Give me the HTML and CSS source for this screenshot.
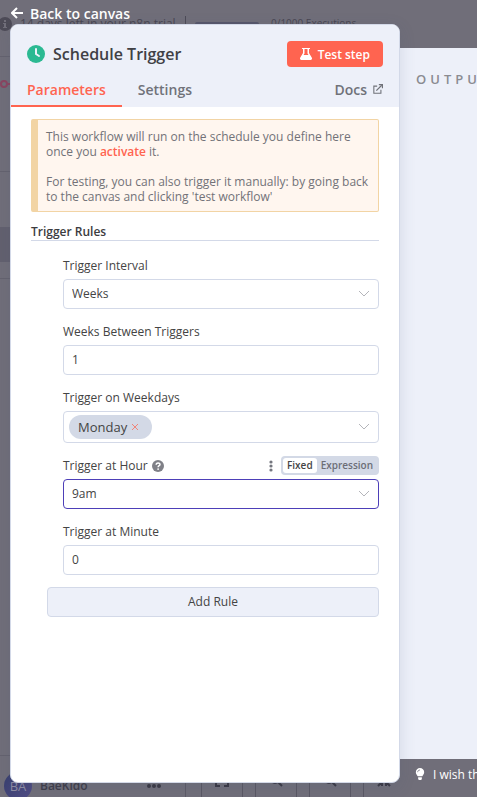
FILE: index.html
```html
<!DOCTYPE html>
<html lang="en">
<head>
<meta charset="utf-8">
<meta name="viewport" content="width=device-width, initial-scale=1">
<title>Schedule Trigger</title>
<link rel="stylesheet" href="styles.css">
</head>
<body>
<div class="app">
  <div class="canvas" aria-hidden="true">
    <div class="trial">
      <svg class="info" viewBox="0 0 14 14"><circle cx="7" cy="7" r="7" fill="#4d4b57"/><path d="M6 3h2v2H6zM5 6h3v4h1v1H5v-1h1V7H5z" fill="#716f7a"/></svg>
      <span class="trial-text">14 days left in your n8n trial</span>
      <span class="trial-rule"></span>
      <span class="meter"></span>
      <span class="quota">0/1000 Executions</span>
    </div>
    <div class="side">
      <div class="side-logo"><svg viewBox="0 0 12 10"><circle cx="4" cy="5" r="3" fill="none" stroke="#8a4560" stroke-width="2"/><path d="M7 5h5" stroke="#8a4560" stroke-width="2"/></svg></div>
      <div class="side-gap"></div>
      <div class="side-active"></div>
      <div class="side-rest"></div>
    </div>
    <div class="foot">
      <div class="user">
        <span class="avatar">BA</span>
        <span class="user-name">BaeKido</span>
        <svg class="dots" viewBox="0 0 14 4" fill="#3a3844"><circle cx="2" cy="2" r="2"/><circle cx="7" cy="2" r="2"/><circle cx="12" cy="2" r="2"/></svg>
      </div>
      <div class="tools">
        <span class="tool"><svg viewBox="0 0 14 14"><path d="M1 5V1h4M9 1h4v4M13 9v4H9M5 13H1V9"/></svg></span>
        <span class="tool"><svg viewBox="0 0 14 14"><circle cx="6" cy="6" r="4"/><path d="M9 9l4 4"/></svg></span>
        <span class="tool"><svg viewBox="0 0 14 14"><circle cx="6" cy="6" r="4"/><path d="M9 9l4 4"/></svg></span>
        <span class="tool"><svg viewBox="0 0 14 14"><path d="M1 13l4-4v4M13 13L9 9v4M1 9h4M13 9H9"/></svg></span>
      </div>
    </div>
  </div>

  <a class="back" href="#">
    <svg viewBox="0 0 12 12"><path d="M6 1L1 6l5 5M1 6h11" fill="none" stroke="#fff" stroke-width="2"/></svg>
    Back to canvas
  </a>

  <main class="workspace">
    <section class="panel">
      <header class="panel-head">
        <div class="title-row">
          <svg class="clock" viewBox="0 0 18 18"><circle cx="9" cy="9" r="9" fill="#2bb992"/><path d="M9 4v5l3 2" fill="none" stroke="#eef1fa" stroke-width="2" stroke-linecap="round"/></svg>
          <h1>Schedule Trigger</h1>
          <button class="test" type="button">
            <svg viewBox="0 0 12 12"><path fill-rule="evenodd" d="M2 0h8v1H9v4l3 5v1l-1 1H1l-1-1v-1l3-5V1H2zM4.500 1v4.500L3.500 7h5L7.500 5.500V1z" fill="#fff"/></svg>
            Test step
          </button>
        </div>
        <nav class="tabs">
          <a class="tab tab-on" href="#">Parameters</a>
          <a class="tab" href="#">Settings</a>
          <a class="tab docs" href="#">Docs
            <svg viewBox="0 0 12 12" fill="none" stroke="currentColor"><path d="M5 2.500H1v8.500h8.500V7" stroke-width="1.300"/><path d="M4 8l6.500-6.500" stroke-width="1.500"/><path d="M7 .700h4.300V5" stroke-width="1.400"/></svg>
          </a>
        </nav>
      </header>

      <form class="panel-body">
        <div class="notice">
          <p>This workflow will run on the schedule you define here once you <a href="#">activate</a> it.</p>
          <p>For testing, you can also trigger it manually: by going back to the canvas and clicking 'test workflow'</p>
        </div>
        <h2>Trigger Rules</h2>
        <div class="rules">
          <div class="row">
            <div class="label-row"><label for="interval">Trigger Interval</label></div>
            <div class="field">
              <select id="interval"><option>Weeks</option></select>
              <svg class="chevron" viewBox="0 0 12 8"><path d="M1 1l5 5 5-5"/></svg>
            </div>
          </div>
          <div class="row">
            <div class="label-row"><label for="between">Weeks Between Triggers</label></div>
            <div class="field"><input id="between" type="text" value="1"></div>
          </div>
          <div class="row">
            <div class="label-row"><label for="weekdays">Trigger on Weekdays</label></div>
            <div class="field field-tags">
              <span class="chip">Monday
                <button type="button" aria-label="Remove Monday"><svg viewBox="0 0 6 6"><path d="M0 0l6 6M6 0L0 6" stroke="#f0857a" stroke-width="1"/></svg></button>
              </span>
              <input id="weekdays" type="text">
              <svg class="chevron" viewBox="0 0 12 8"><path d="M1 1l5 5 5-5"/></svg>
            </div>
          </div>
          <div class="row">
            <div class="label-row">
              <label for="hour">Trigger at Hour</label>
              <svg class="help" viewBox="0 0 12 12"><circle cx="6" cy="6" r="6" fill="#7f8087"/><path d="M4.200 4.700C4.200 2.400 8 2.400 8 4.500 8 5.800 6.100 5.700 6.100 7.200" fill="none" stroke="#fff" stroke-width="1.500"/><circle cx="6.100" cy="9.100" r=".9" fill="#fff"/></svg>
              <svg class="more" viewBox="0 0 4 12" fill="#74767e"><circle cx="2" cy="2" r="1.600"/><circle cx="2" cy="6" r="1.600"/><circle cx="2" cy="10" r="1.600"/></svg>
              <div class="mode" role="radiogroup" aria-label="Value type">
                <label><input type="radio" name="mode" checked><span>Fixed</span></label>
                <label><input type="radio" name="mode"><span>Expression</span></label>
              </div>
            </div>
            <div class="field field-focus">
              <select id="hour"><option>9am</option></select>
              <svg class="chevron" viewBox="0 0 12 8"><path d="M1 1l5 5 5-5"/></svg>
            </div>
          </div>
          <div class="row">
            <div class="label-row"><label for="minute">Trigger at Minute</label></div>
            <div class="field"><input id="minute" type="text" value="0"></div>
          </div>
        </div>
        <button class="add" type="button">Add Rule</button>
      </form>
    </section>

    <aside class="output-side">
      <section class="output"><h2>OUTPUT</h2></section>
      <a class="wish" href="#">
        <svg viewBox="0 0 10 14" fill="#fff"><path d="M5 0a4.500 4.500 0 0 1 4.500 4.500C9.500 6.500 8 7.500 7.500 9h-5C2 7.500.5 6.500.5 4.500A4.500 4.500 0 0 1 5 0zM3 10h4v2L6 13H4l-1-1z"/><path d="M2.500 4.500C2.500 3 3.500 2.200 5 2.200" fill="none" stroke="#706e79" stroke-width=".8"/></svg>
        I wish this node would...
      </a>
    </aside>
  </main>
</div>
</body>
</html>
```
FILE: styles.css
```css
* { box-sizing: border-box; }

body {
  margin: 0;
  font-family: "Open Sans", "Noto Sans", sans-serif;
  font-size: 12px;
  line-height: 15px;
  color: #444;
}

h1, h2, p { margin: 0; }
a { text-decoration: none; color: inherit; }
svg { display: block; flex: none; }

button, input, select {
  font: inherit;
  color: inherit;
  border: 0;
  padding: 0;
  margin: 0;
  background: none;
}

.app {
  position: relative;
  display: flex;
  flex-direction: column;
  min-height: 100vh;
  overflow: hidden;
  background: #706e79;
}

/* Dimmed editor behind the dialog */
.canvas {
  position: absolute;
  inset: 0;
  display: flex;
  flex-direction: column;
  color: #484652;
}

.trial {
  display: flex;
  align-items: center;
  height: 57px;
  padding-bottom: 9px;
  border-bottom: 1px solid #64626e;
  white-space: nowrap;
}
.info { width: 14px; height: 14px; margin: 0 8px 0 -2px; }
.trial-text { width: 165px; }
.trial-rule { width: 1px; height: 16px; background: #4d4b57; }
.meter { width: 64px; height: 4px; margin: 0 12px 0 9px; border-radius: 2px; background: #56566a; }
.quota { font-size: 10px; }

.side { flex: 1; display: flex; flex-direction: column; width: 185px; }
.side-logo { height: 115px; padding-top: 22px; border-bottom: 1px solid #64626e; }
.side-logo svg { width: 12px; height: 10px; }
.side-gap { height: 55px; }
.side-active { height: 35px; background: #62606e; }
.side-rest { height: 17px; border-bottom: 1px solid #64626e; }

.foot { display: flex; height: 42px; border-top: 1px solid #64626e; }
.user {
  display: flex;
  align-items: center;
  width: 186px;
  padding: 18px 24px 0 4px;
  border-right: 1px solid #5c5a66;
}
.avatar {
  width: 28px;
  height: 28px;
  border-radius: 50%;
  background: linear-gradient(135deg, #363e6c, #524d86);
  color: #8f8da5;
  font-size: 13px;
  line-height: 28px;
  text-align: center;
}
.user-name { margin-left: 8px; font-size: 12px; font-weight: 600; color: #3e3c48; }
.dots { width: 14px; height: 4px; margin-left: auto; }
.tools { display: flex; gap: 12px; padding-left: 15px; }
.tool {
  width: 42px;
  padding: 17px 13px 0;
  border: 1px solid #595763;
  border-width: 0 1px;
}
.tool svg { width: 14px; height: 14px; fill: none; stroke: #3a3844; stroke-width: 2; }

/* Dialog */
.back {
  position: relative;
  display: flex;
  align-items: center;
  gap: 7px;
  height: 24px;
  padding: 2px 11px 0;
  color: #fff;
  font-size: 14px;
  font-weight: 600;
}
.back svg { width: 12px; height: 12px; }

.workspace {
  position: relative;
  flex: 1;
  display: grid;
  grid-template-columns: 1fr 77px;
  padding-left: 10px;
}

.panel {
  z-index: 1;
  margin-bottom: 14px;
  border: 1px solid #d3d9e8;
  border-radius: 8px;
  background: #fff;
  box-shadow: 0 4px 16px rgba(68, 84, 120, 0.16);
  overflow: hidden;
}

.panel-head { background: #edf0f9; }
.title-row {
  display: flex;
  align-items: center;
  gap: 8px;
  padding: 16px 16px 0;
}
.clock { width: 18px; height: 18px; }
h1 { font-size: 16px; line-height: 24px; font-weight: 600; color: #404045; }

.test {
  display: flex;
  align-items: center;
  gap: 6px;
  height: 26px;
  margin-left: auto;
  padding: 0 13px;
  border-radius: 4px;
  background: #ff6450;
  color: #fff;
  font-weight: 600;
}
.test svg { width: 12px; height: 12px; }

.tabs { display: flex; }
.tab {
  display: flex;
  align-items: center;
  gap: 6px;
  height: 40px;
  padding: 6px 16px 0;
  border-bottom: 2px solid transparent;
  font-size: 14px;
  font-weight: 600;
  color: #707279;
}
.tab-on { color: #ff6450; border-color: #ff6450; }
.docs { margin-left: auto; }
.docs svg { width: 10px; height: 10px; }

.panel-body { display: flex; flex-direction: column; padding: 12px 20px; }

.notice {
  display: flex;
  flex-direction: column;
  gap: 15px;
  padding: 9px 8px 7px;
  border: 1px solid #f2d4a4;
  border-left-width: 7px;
  border-radius: 2px;
  background: #fff6ef;
  color: #727278;
}
.notice a { color: #ff6450; font-weight: 600; }

.panel-body h2 {
  margin-top: 12px;
  padding-bottom: 1px;
  border-bottom: 1px solid #d3d9e8;
  font-size: 12px;
  line-height: 15px;
  font-weight: 600;
  color: #3c3c40;
}

.rules {
  display: flex;
  flex-direction: column;
  gap: 12px;
  padding: 14px 0 12px 32px;
}
.label-row { display: flex; align-items: center; height: 24px; padding-bottom: 3px; }
.help { width: 12px; height: 12px; margin-left: 4px; }
.more { width: 4px; height: 12px; margin: 0 8px 0 auto; }

.field {
  display: flex;
  align-items: center;
  height: 30px;
  padding: 0 8px;
  border: 1px solid #d3d9e8;
  border-radius: 4px;
  background: #fff;
}
.field-focus { border-color: #4d3fb8; }
.field-tags { height: 32px; padding-left: 5px; }
.field input, .field select {
  flex: 1;
  min-width: 0;
  height: 28px;
  padding-bottom: 1px;
  outline: 0;
  appearance: none;
}
.chevron { width: 12px; height: 8px; fill: none; stroke: #b4b5ba; }

.chip {
  display: flex;
  align-items: center;
  gap: 5px;
  height: 24px;
  padding: 0 14px 0 9px;
  border-radius: 12px;
  background: #d3d9e6;
  font-size: 13px;
}
.chip svg { width: 6px; height: 6px; }

.mode {
  display: flex;
  height: 19px;
  padding: 2px;
  border-radius: 4px;
  background: #d3d9e6;
  font-size: 10px;
  font-weight: 600;
  color: #6c6e76;
}
.mode input { position: absolute; opacity: 0; }
.mode span { display: block; padding: 0 4px; border-radius: 3px; }
.mode input:checked + span { background: #fff; color: #444; }

.add {
  height: 30px;
  margin-left: 16px;
  padding-bottom: 1px;
  border: 1px solid #d3d9e8;
  border-radius: 4px;
  background: #edf0f9;
}

.output-side { display: flex; flex-direction: column; min-width: 0; padding-top: 24px; }
.output { flex: 1; padding: 22px 16px; background: #edf0f9; overflow: hidden; }
.output h2 {
  font-size: 13px;
  line-height: 18px;
  font-weight: 600;
  letter-spacing: 4px;
  color: #8a8b91;
}
.wish {
  display: flex;
  align-items: center;
  gap: 8px;
  height: 38px;
  padding: 0 15px 8px;
  background: #706e79;
  color: #fff;
  white-space: nowrap;
}
.wish svg { width: 10px; height: 13px; }
```
